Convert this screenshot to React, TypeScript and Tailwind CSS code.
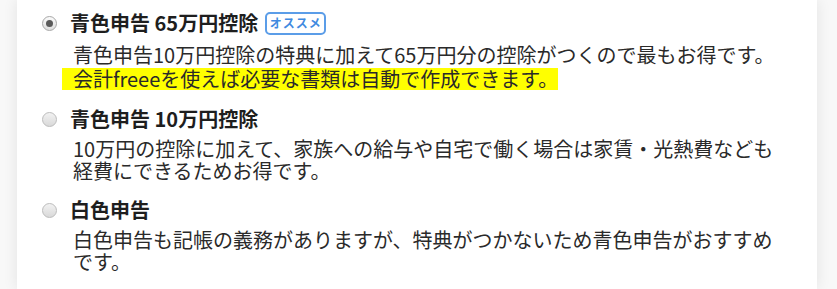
import React from "react";

type Plan = {
  title: string;
  checked?: boolean;
  badge?: string;
  body: React.ReactNode;
  bodyClass: string;
};

function Radio({ checked }: { checked?: boolean }) {
  if (checked) {
    return (
      <span className="flex h-[15px] w-[15px] shrink-0 items-center justify-center rounded-full border border-[#a8a8a8] bg-gradient-to-b from-[#fbfbfb] to-[#dedede]">
        <span className="h-[7px] w-[7px] rounded-full bg-[#5a5a5a]" />
      </span>
    );
  }
  return (
    <span className="h-[15px] w-[15px] shrink-0 rounded-full border border-[#bcbcbc] bg-gradient-to-b from-[#f2f2f2] to-[#d9d9d9]" />
  );
}

const plans: Plan[] = [
  {
    title: "青色申告 65万円控除",
    checked: true,
    badge: "オススメ",
    bodyClass: "mt-[5px] leading-[24px]",
    body: (
      <>
        青色申告10万円控除の特典に加えて65万円分の控除がつくので最もお得です。
        <br />
        <span className="-ml-[11px] inline-block bg-[#ffff00] pl-[11px] leading-[22px]">
          会計freeeを使えば必要な書類は自動で作成できます。
        </span>
      </>
    ),
  },
  {
    title: "青色申告 10万円控除",
    bodyClass: "mt-1 leading-[22px]",
    body: "10万円の控除に加えて、家族への給与や自宅で働く場合は家賃・光熱費なども経費にできるためお得です。",
  },
  {
    title: "白色申告",
    bodyClass: "mt-1 leading-[22px]",
    body: "白色申告も記帳の義務がありますが、特典がつかないため青色申告がおすすめです。",
  },
];

export default function App() {
  return (
    <div
      className="h-[289px] w-full overflow-hidden bg-[#f8f8f8]"
      style={{ fontFamily: '"Noto Sans CJK JP", "Noto Sans", sans-serif' }}
    >
      <div className="ml-[17px] h-full w-[800px] bg-white pl-[25px] pt-[8px] shadow-[0_0_14px_rgba(0,0,0,0.09)]">
        <div className="flex flex-col gap-[13px]">
          {plans.map((plan) => (
            <div key={plan.title}>
              <div className="flex h-[30px] items-center">
                <Radio checked={plan.checked} />
                <span className="ml-[13px] text-[20px] font-bold leading-[30px] text-[#1e1e1e]">
                  {plan.title}
                </span>
                {plan.badge && (
                  <span className="ml-[7px] flex h-[23px] w-[61px] items-center justify-center rounded-[5px] border-2 border-[#5b9de8] text-[12px] font-bold tracking-[1px] text-[#3f8ae0]">
                    {plan.badge}
                  </span>
                )}
              </div>
              <p className={`ml-[31px] w-[710px] text-[20px] text-[#2a2a2a] ${plan.bodyClass}`}>
                {plan.body}
              </p>
            </div>
          ))}
        </div>
      </div>
    </div>
  );
}
